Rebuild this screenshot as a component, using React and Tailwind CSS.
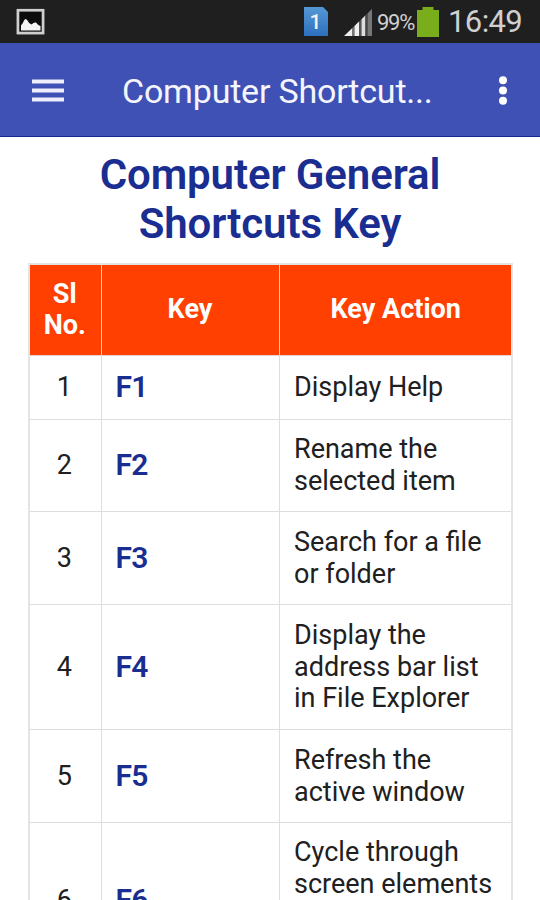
import React from "react";

const shortcuts = [
    { no: 1, keyName: "F1", lines: ["Display Help"], height: "h-[64px]" },
    { no: 2, keyName: "F2", lines: ["Rename the", "selected item"], height: "h-[92px]" },
    { no: 3, keyName: "F3", lines: ["Search for a file", "or folder"], height: "h-[93px]" },
    { no: 4, keyName: "F4", lines: ["Display the", "address bar list", "in File Explorer"], height: "h-[125px]" },
    { no: 5, keyName: "F5", lines: ["Refresh the", "active window"], height: "h-[93px]" },
    { no: 6, keyName: "F6", lines: ["Cycle through", "screen elements", "in a window or", "on the desktop"], height: "h-[156px]" },
];

const StatusBar = () => (
    <div className="h-[43px] bg-[#1f1f1f] flex items-center pl-4 pr-[15px] shrink-0 text-[#d0d0d0]">
        {/* Screenshot notification */}
        <svg width="29" height="27" viewBox="0 0 29 27">
            <rect width="29" height="27" fill="#0a0a0a" />
            <rect x="1.9" y="2.2" width="25.2" height="22.9" fill="#0d0d0d" stroke="#cfcfcf" strokeWidth="2.8" />
            <path d="M5 22.500V17.500Q7 15.500 8 12.500Q9.500 9.500 11.500 12.500Q13 16 15.500 16.500Q18 14 20 14.500Q22 17.500 24.500 18V22.500z" fill="#f4f4f4" />
        </svg>

        <div className="ml-auto flex items-center">
            {/* SIM card */}
            <svg width="24" height="29" viewBox="0 0 24 29">
                <defs>
                    <linearGradient id="sim" x1="0" y1="0" x2="0" y2="1">
                        <stop offset="0" stopColor="#5598d5" />
                        <stop offset="1" stopColor="#2e70bd" />
                    </linearGradient>
                </defs>
                <path d="M0 0h19l5 5v24H0z" fill="url(#sim)" />
                <text x="11.500" y="21.500" textAnchor="middle" fontFamily="Roboto, sans-serif" fontSize="21" fontWeight="500" fill="#f0f0f0">1</text>
            </svg>
            {/* Signal strength */}
            <svg className="ml-4 mt-0.5" width="29" height="27" viewBox="0 0 29 27">
                <defs>
                    <clipPath id="wedge">
                        <path d="M0 27L28 0v27z" />
                    </clipPath>
                </defs>
                <g clipPath="url(#wedge)">
                    <rect x="0" width="8" height="27" fill="#eeeeee" />
                    <rect x="8" width="2.5" height="27" fill="#777777" />
                    <rect x="10.500" width="4.500" height="27" fill="#f0f0f0" />
                    <rect x="15" width="2.500" height="27" fill="#555555" />
                    <rect x="17.500" width="4" height="27" fill="#dedede" />
                    <rect x="21.500" width="2" height="27" fill="#444444" />
                    <rect x="23.500" width="4.500" height="27" fill="#777777" />
                </g>
            </svg>
            <span className="ml-[4px] w-[37px] mt-[3px] text-[22px] leading-none tracking-[-1.3px]">99%</span>
            <svg className="ml-[3px] mt-px" width="22" height="30" viewBox="0 0 22 30">
                <path d="M5.500 0h11v3H22v27H0V3h5.500z" fill="#79ad1b" />
            </svg>
            <span className="ml-[9px] w-[77px] text-[31px] leading-none tracking-[-0.6px]">16:49</span>
        </div>
    </div>
);

const AppBar = () => (
    <header className="h-[94px] bg-[#3f51b5] border-b border-[#142b8d] flex items-center pl-8 shrink-0">
        <svg className="mt-px" width="32" height="23" viewBox="0 0 32 23" fill="#eeeefc">
            <rect y="0.500" width="32" height="4" />
            <rect y="9.500" width="32" height="4" />
            <rect y="18.500" width="32" height="4" />
        </svg>
        <h2 className="ml-[58px] mt-0.5 w-[350px] text-[34px] leading-none tracking-[-0.2px] text-[#f4f5fd] whitespace-nowrap">
            Computer Shortcut...
        </h2>
        <svg className="ml-[26px] mt-0.5" width="10" height="29" viewBox="0 0 10 29" fill="#fff">
            <circle cx="5" cy="4.300" r="4" />
            <circle cx="5" cy="14.500" r="4" />
            <circle cx="5" cy="24.700" r="4" />
        </svg>
    </header>
);

const App = () => {
    return (
        <div className="w-[540px] h-[900px] overflow-hidden bg-white flex flex-col font-['Roboto',sans-serif]">
            <StatusBar />
            <AppBar />

            <h1 className="mt-[13px] text-center text-[42px] leading-[49px] font-semibold text-[#1a2d91] tracking-[-0.1px] shrink-0">
                Computer General
                <br />
                Shortcuts Key
            </h1>

            {/* Shortcut table */}
            <table className="mt-[15px] ml-7 w-[485px] table-fixed border-collapse border-2 border-[#e4e4e4] text-[27px] leading-[31.5px]">
                <colgroup>
                    <col className="w-[72px]" />
                    <col className="w-[178px]" />
                    <col />
                </colgroup>
                <thead>
                    <tr className="h-[91px] bg-[#ff4000] text-white">
                        <th className="p-0 pr-px pt-px border border-[#e4d5d2] font-bold">
                            Sl
                            <br />
                            No.
                        </th>
                        <th className="p-0 border border-[#e4d5d2] font-bold">Key</th>
                        <th className="p-0 pl-px border border-[#e4d5d2] font-bold">Key Action</th>
                    </tr>
                </thead>
                <tbody>
                    {shortcuts.map((item) => (
                        <tr key={item.no} className={item.height}>
                            <td className="p-0 pr-0.5 pt-0.5 border border-[#dedede] text-center text-[#202020]">{item.no}</td>
                            <td className="p-0 pl-[14px] border border-[#dedede] text-[30px] font-semibold tracking-[-0.8px] text-[#1a2d91]">{item.keyName}</td>
                            <td className="p-0 pl-[14.5px] pt-0.5 border border-[#dedede] text-[#202020] leading-[31.8px] whitespace-nowrap">
                                {item.lines.map((line) => (
                                    <div key={line}>{line}</div>
                                ))}
                            </td>
                        </tr>
                    ))}
                </tbody>
            </table>
        </div>
    );
};

export default App;
